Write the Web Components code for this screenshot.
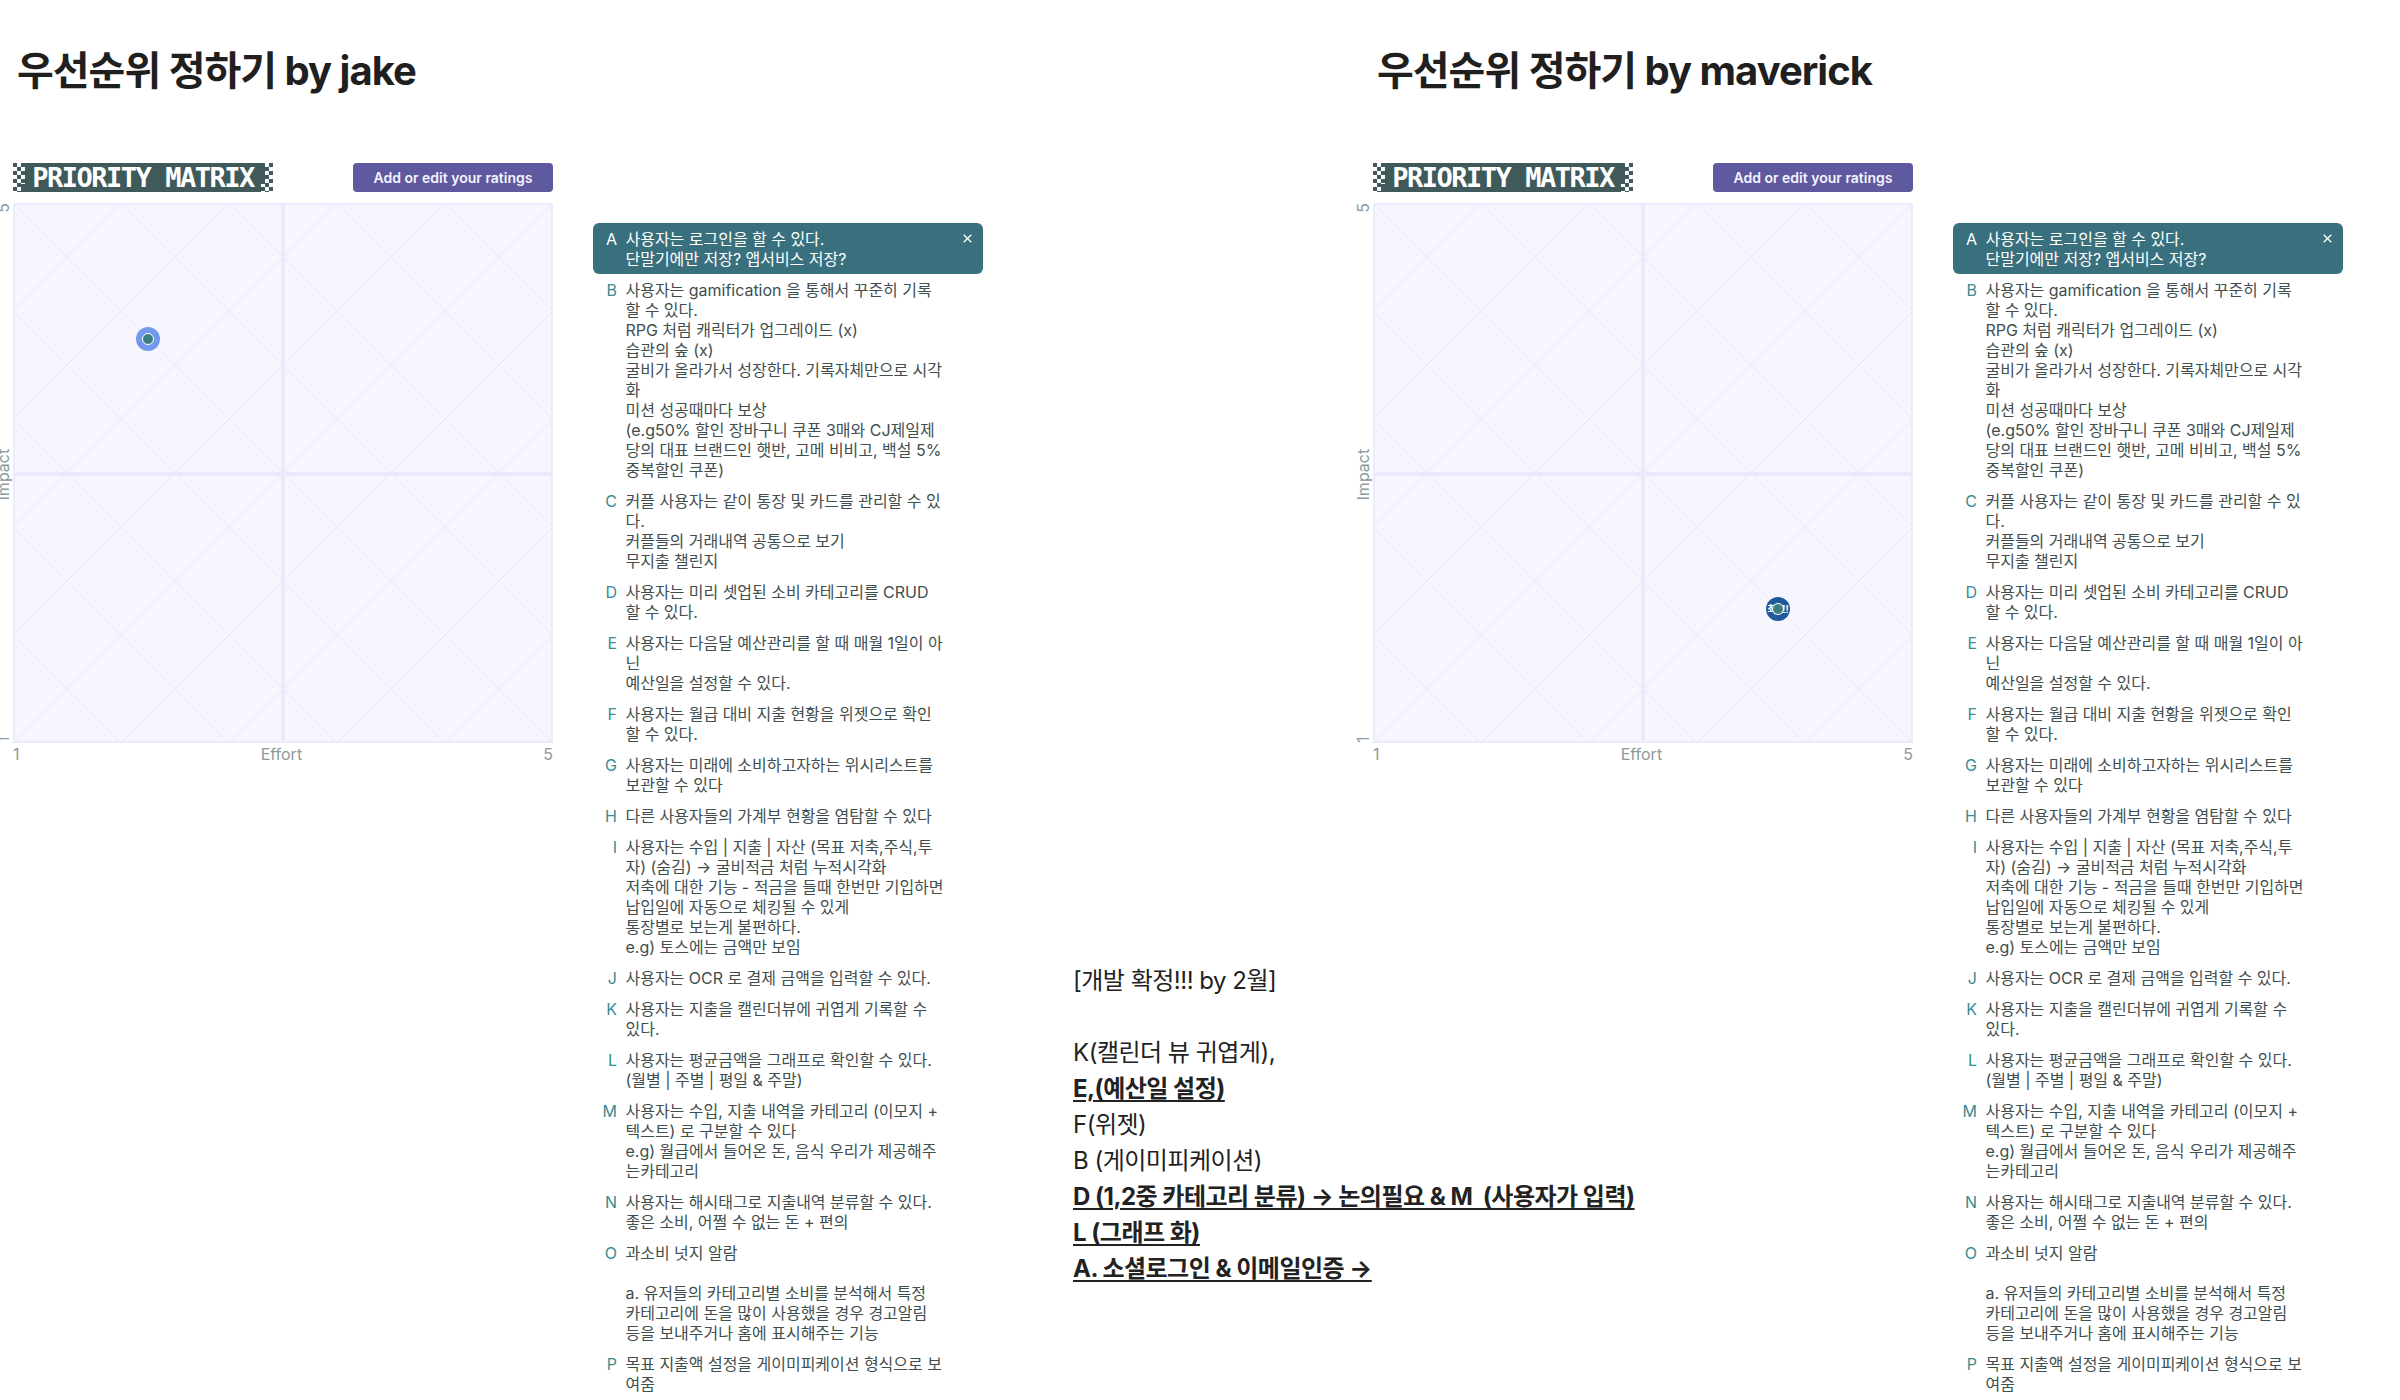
<!DOCTYPE html>
<html><head><meta charset="utf-8">
<style>
html,body{margin:0;padding:0;background:#fff;width:2400px;height:1400px;overflow:hidden}
body{font-family:Inter,"Noto Sans CJK KR",sans-serif;display:grid;grid-template-columns:1360px 1040px}
</style></head><body>
<template id="tpl-board">
<style>
:host{display:block;height:1400px;padding-top:47px;box-sizing:border-box}
h1{margin:0 0 0 17px;font:700 40px/48px Inter,"Noto Sans CJK KR",sans-serif;letter-spacing:-1px;color:#1f1f1f}
.main{display:flex;margin-top:68px;margin-left:13px}
.left{width:540px;flex:none}
.right{margin-left:40px;width:390px;flex:none;margin-top:60px}
.notes{margin-left:90px;margin-top:800px;flex:none}
</style>
<h1><slot name="title"></slot></h1>
<div class="main">
<div class="left"><slot name="matrix"></slot></div>
<div class="right"><slot name="list"></slot></div>
<div class="notes"><slot name="notes"></slot></div>
</div>
</template>

<template id="tpl-matrix">
<style>
:host{display:block;position:relative}
.top{display:flex;justify-content:space-between;align-items:stretch;height:29px;margin-bottom:11px}
.logo{position:relative;width:260px;height:29px;display:flex;align-items:center;justify-content:center}
.logo svg{position:absolute;left:0;top:0}
.name{position:relative;color:#fff;font:700 27px/29px "DejaVu Sans Mono",monospace;letter-spacing:-1.5px;white-space:nowrap}
button{all:unset;width:200px;height:29px;background:#5f5aa0;border-radius:4px;color:#f5f4fc;font:600 14px/29px Inter,sans-serif;text-align:center}
.chart{position:relative;width:540px;height:540px;box-sizing:border-box;background:#f7f6fe;border:2px solid #ecebfc}
.chart svg.grid{position:absolute;left:-2px;top:-2px}
.v{position:absolute;left:266px;top:0;bottom:0;width:3.5px;background:#ebe9fc}
.h{position:absolute;top:267px;left:0;right:0;height:3.5px;background:#ebe9fc}
.lab{color:#8b9a9a;font:400 16px/20px Inter,sans-serif}
.xa{display:flex;justify-content:space-between;margin-top:1px;height:20px}
.ya{position:absolute;top:40px;left:-20px;width:540px;height:20px;transform-origin:0 0;transform:translate(0,540px) rotate(-90deg);display:flex;justify-content:space-between}
</style>
<div class="top">
<div class="logo">
<svg width="260" height="29" viewBox="0 0 260 29"><defs><pattern id="ck" width="8" height="8" patternUnits="userSpaceOnUse"><rect width="4" height="4" fill="#405a5c"/><rect x="4" y="4" width="4" height="4" fill="#405a5c"/></pattern></defs>
<rect x="0" y="0" width="12" height="21" fill="url(#ck)"/><rect x="0" y="21" width="8" height="8" fill="url(#ck)"/>
<rect x="252" y="0" width="8" height="21" fill="url(#ck)"/><rect x="248" y="21" width="12" height="8" fill="url(#ck)"/>
<path d="M12 0H252V21H248V29H8V21H12Z" fill="#405a5c"/></svg>
<div class="name">PRIORITY MATRIX</div>
</div>
<button>Add or edit your ratings</button>
</div>
<div class="chart" id="c">
<svg class="grid" width="540" height="540" viewBox="0 0 540 540"><defs><pattern id="p" width="108" height="108" patternUnits="userSpaceOnUse"><path d="M0 0L108 108M108 0L0 108" stroke="#ecebfc" stroke-width="1.2" fill="none"/></pattern></defs><rect width="540" height="540" fill="url(#p)"/></svg>
<div class="v"></div><div class="h"></div>
<slot></slot>
</div>
<div class="xa lab"><span>1</span><span>Effort</span><span>5</span></div>
<div class="ya lab"><span>1</span><span>Impact</span><span>5</span></div>
</template>

<template id="tpl-dot">
<style>
:host{display:flex;position:absolute;width:24px;height:24px;border-radius:50%;background:var(--bg,#7299ee);transform:translate(-50%,-50%);overflow:hidden;align-items:center;justify-content:center;color:#fff;font:600 10px/24px Inter,"Noto Sans CJK KR",sans-serif;white-space:nowrap}
.i{position:absolute;left:6px;top:6px;width:12px;height:12px;box-sizing:border-box;border-radius:50%;background:#3a7e80;border:1px solid #fff}
:host([plain]) .i{border-color:transparent}
</style>
<slot></slot><div class="i"></div>
</template>

<template id="tpl-item">
<style>
:host{display:grid;grid-template-columns:24px 1fr;column-gap:8.5px;padding:5.5px 0;font:400 16px/20px Inter,"Noto Sans CJK KR",sans-serif;color:#3f4e4e;border-radius:6px;position:relative;white-space:nowrap}
:host([active]){background:#39707e;color:#fff}
.k{text-align:right;color:#3b8b8f}
:host([active]) .k{color:#fff}
.t{letter-spacing:-.02px}
svg{position:absolute;right:11px;top:11px;display:none}
:host([active]) svg{display:block}
</style>
<div class="k" id="k"></div><div class="t"><slot></slot></div>
<svg width="9" height="9" viewBox="0 0 9 9"><path d="M.7.7l7.6 7.6M8.3.7L.7 8.3" stroke="#fff" stroke-width="1.3" fill="none"/></svg>
</template>

<template id="tpl-notes">
<style>
:host{display:block;font:400 24px/36px Inter,"Noto Sans CJK KR",sans-serif;letter-spacing:-.5px;color:#222;white-space:nowrap}
::slotted(b){font-weight:700;text-decoration:underline;text-underline-offset:3px;text-decoration-thickness:1.5px}
</style>
<slot></slot>
</template>

<template id="tpl-list">
<style>:host{display:block}</style><slot></slot>
</template>

<script>
function reg(name,tpl,extra){customElements.define(name,class extends HTMLElement{
constructor(){super();const r=this.attachShadow({mode:'open'});r.appendChild(document.getElementById(tpl).content.cloneNode(true));}
connectedCallback(){if(extra)extra(this)}
})}
reg('prio-board','tpl-board');
reg('prio-matrix','tpl-matrix');
reg('prio-dot','tpl-dot',e=>{e.style.left=e.getAttribute('x')+'px';e.style.top=e.getAttribute('y')+'px';if(e.hasAttribute('bg'))e.style.setProperty('--bg',e.getAttribute('bg'))});
reg('prio-item','tpl-item',e=>{e.shadowRoot.getElementById('k').textContent=e.getAttribute('k')});
reg('prio-list','tpl-list');
reg('prio-notes','tpl-notes');
</script>

<script>
const items=[
['A','사용자는 로그인을 할 수 있다.<br>단말기에만 저장? 앱서비스 저장?'],
['B','사용자는 gamification 을 통해서 꾸준히 기록<br>할 수 있다.<br>RPG 처럼 캐릭터가 업그레이드 (x)<br>습관의 숲 (x)<br>굴비가 올라가서 성장한다. 기록자체만으로 시각<br>화<br>미션 성공때마다 보상<br>(e.g50% 할인 장바구니 쿠폰 3매와 CJ제일제<br>당의 대표 브랜드인 햇반, 고메 비비고, 백설 5%<br>중복할인 쿠폰)'],
['C','커플 사용자는 같이 통장 및 카드를 관리할 수 있<br>다.<br>커플들의 거래내역 공통으로 보기<br>무지출 챌린지'],
['D','사용자는 미리 셋업된 소비 카테고리를 CRUD<br>할 수 있다.'],
['E','사용자는 다음달 예산관리를 할 때 매월 1일이 아<br>닌<br>예산일을 설정할 수 있다.'],
['F','사용자는 월급 대비 지출 현황을 위젯으로 확인<br>할 수 있다.'],
['G','사용자는 미래에 소비하고자하는 위시리스트를<br>보관할 수 있다'],
['H','다른 사용자들의 가계부 현황을 염탐할 수 있다'],
['I','사용자는 수입 | 지출 | 자산 (목표 저축,주식,투<br>자) (숨김) → 굴비적금 처럼 누적시각화<br>저축에 대한 기능 - 적금을 들때 한번만 기입하면<br>납입일에 자동으로 체킹될 수 있게<br>통장별로 보는게 불편하다.<br>e.g) 토스에는 금액만 보임'],
['J','사용자는 OCR 로 결제 금액을 입력할 수 있다.'],
['K','사용자는 지출을 캘린더뷰에 귀엽게 기록할 수<br>있다.'],
['L','사용자는 평균금액을 그래프로 확인할 수 있다.<br>(월별 | 주별 | 평일 & 주말)'],
['M','사용자는 수입, 지출 내역을 카테고리 (이모지 +<br>텍스트) 로 구분할 수 있다<br>e.g) 월급에서 들어온 돈, 음식 우리가 제공해주<br>는카테고리'],
['N','사용자는 해시태그로 지출내역 분류할 수 있다.<br>좋은 소비, 어쩔 수 없는 돈 + 편의'],
['O','과소비 넛지 알람<br><br>a. 유저들의 카테고리별 소비를 분석해서 특정<br>카테고리에 돈을 많이 사용했을 경우 경고알림<br>등을 보내주거나 홈에 표시해주는 기능'],
['P','목표 지출액 설정을 게이미피케이션 형식으로 보<br>여줌']
];
function board(name,dot){
const b=document.createElement('prio-board');
const esc=s=>s.replace(/&/g,'&amp;');
b.innerHTML=`<span slot="title">우선순위 정하기 by ${name}</span>
<prio-matrix slot="matrix">${dot}</prio-matrix>
<prio-list slot="list">${items.map((it,i)=>`<prio-item k="${it[0]}"${i==0?' active':''}>${esc(it[1])}</prio-item>`).join('')}</prio-list>`;
return b;
}
const b1=board('jake','<prio-dot x="133" y="134" bg="#7299ee"></prio-dot>');
document.body.appendChild(b1);
document.body.appendChild(board('maverick','<prio-dot x="403" y="404" bg="#1f5a9d">최고!</prio-dot>'));
const n=document.createElement('prio-notes');
n.slot='notes';
n.innerHTML='[개발 확정!!! by 2월]<br><br>K(캘린더 뷰 귀엽게),<br><b>E,(예산일 설정)</b><br>F(위젯)<br>B (게이미피케이션)<br><b>D (1,2중 카테고리 분류) → 논의필요 &amp; M &nbsp;(사용자가 입력)</b><br><b>L (그래프 화)</b><br><b>A. 소셜로그인 &amp; 이메일인증 →</b>';
b1.appendChild(n);
</script>
</body></html>
